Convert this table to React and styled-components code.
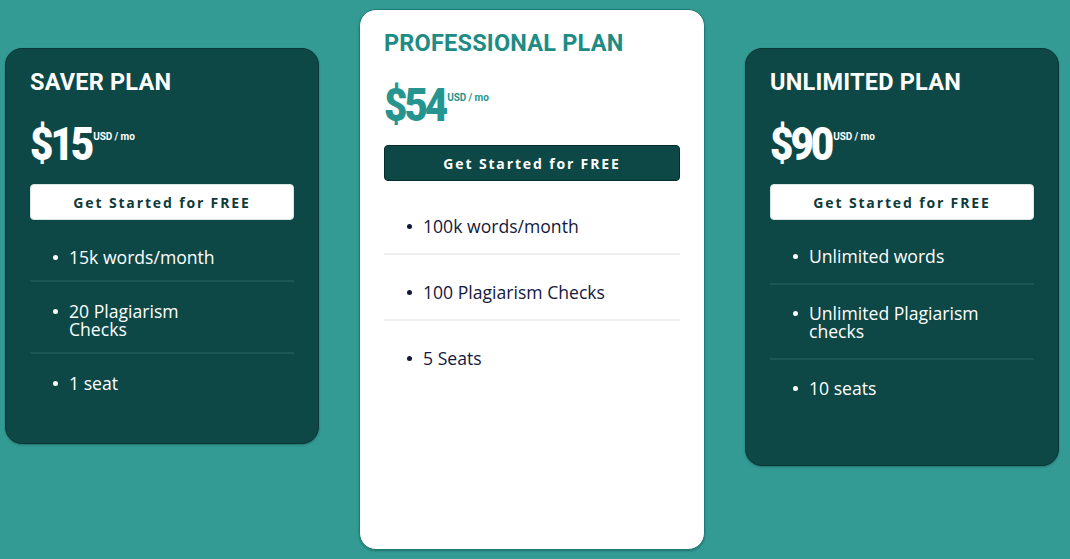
import React from 'react';
import styled, { createGlobalStyle } from 'styled-components';

const GlobalStyle = createGlobalStyle`
  html, body {
    margin: 0;
    padding: 0;
    background: #339a94;
  }
  * { box-sizing: border-box; }
`;

const plans = [
  {
    name: 'SAVER PLAN',
    price: '$15',
    features: ['15k words/month', '20 Plagiarism Checks', '1 seat'],
    height: 396,
    tight: true,
  },
  {
    name: 'PROFESSIONAL PLAN',
    price: '$54',
    features: ['100k words/month', '100 Plagiarism Checks', '5 Seats'],
    height: 541,
    featured: true,
  },
  {
    name: 'UNLIMITED PLAN',
    price: '$90',
    features: ['Unlimited words', 'Unlimited Plagiarism checks', '10 seats'],
    height: 418,
  },
];

const App = () => {
  return (
    <Page>
      <GlobalStyle />
      {plans.map((plan) => (
        <Card key={plan.name} $featured={plan.featured} $height={plan.height}>
          <PlanName $featured={plan.featured}>{plan.name}</PlanName>
          <PriceRow $featured={plan.featured}>
            <Price>{plan.price}</Price>
            <Unit>USD / mo</Unit>
          </PriceRow>
          <StartBtn $featured={plan.featured}>Get Started for FREE</StartBtn>
          <Features>
            {plan.features.map((f) => (
              <Feature key={f} $featured={plan.featured} $tight={plan.tight}>
                <Dot $featured={plan.featured} />
                <FeatureText $featured={plan.featured}>{f}</FeatureText>
              </Feature>
            ))}
          </Features>
        </Card>
      ))}
    </Page>
  );
};

const Page = styled.div`
  width: 1070px;
  height: 559px;
  display: flex;
  align-items: flex-start;
  gap: 40px;
  padding: 48px 0 0 5px;
  overflow: hidden;
`;
const Card = styled.div`
  width: ${(p) => (p.$featured ? '346px' : '314px')};
  height: ${(p) => p.$height}px;
  margin-top: ${(p) => (p.$featured ? '-39px' : '0')};
  padding: 24px 24px 0;
  border-radius: 17px;
  background: ${(p) => (p.$featured ? '#ffffff' : '#0d4846')};
  border: 1px solid ${(p) => (p.$featured ? '#1d7d77' : '#0a3735')};
  box-shadow: 0 1px 2px rgba(0, 40, 40, 0.35);
  display: flex;
  flex-direction: column;
`;
const PlanName = styled.h2`
  margin: 0;
  height: 18px;
  font-family: Roboto, 'Liberation Sans', sans-serif;
  font-weight: 700;
  font-size: 23.5px;
  line-height: 19px;
  letter-spacing: 0.2px;
  color: ${(p) => (p.$featured ? '#1e8c85' : '#ffffff')};
`;
const PriceRow = styled.div`
  margin-top: 34px;
  display: flex;
  align-items: flex-start;
  color: ${(p) => (p.$featured ? '#27958f' : '#ffffff')};
  font-family: Roboto, 'Liberation Sans', sans-serif;
  font-weight: 700;
`;
const Price = styled.span`
  display: inline-block;
  font-size: 47px;
  line-height: 38px;
  font-weight: 900;
  letter-spacing: -3.5px;
  transform: scaleX(0.86);
  transform-origin: left center;
  margin-right: -9px;
`;
const Unit = styled.span`
  margin-left: 1px;
  margin-top: 7px;
  font-size: 10px;
  line-height: 10px;
  letter-spacing: -0.1px;
`;
const StartBtn = styled.button`
  margin-top: 21px;
  width: 100%;
  height: 36px;
  border-radius: 4px;
  border: 1px solid ${(p) => (p.$featured ? '#072e2c' : '#d9e4e3')};
  background: ${(p) => (p.$featured ? '#0d4846' : '#ffffff')};
  color: ${(p) => (p.$featured ? '#ffffff' : '#0d3b39')};
  font-family: 'Open Sans', 'Liberation Sans', sans-serif;
  font-weight: 700;
  font-size: 14px;
  letter-spacing: 1.85px;
  cursor: pointer;
`;
const Features = styled.ul`
  list-style: none;
  margin: 8px 0 0;
  padding: 0;
`;
const Feature = styled.li`
  display: flex;
  align-items: flex-start;
  padding: ${(p) => (p.$featured ? '28px 0 18px' : p.$tight ? '20px 0 14px' : '19px 0 18px')};
  padding-left: 23px;
  border-bottom: 2px solid ${(p) => (p.$featured ? '#eeeeee' : '#1a5654')};
  &:last-child {
    border-bottom: none;
  }
`;
const Dot = styled.span`
  flex: none;
  width: 5px;
  height: 5px;
  margin: 7px 11px 0 0;
  border-radius: 50%;
  background: ${(p) => (p.$featured ? '#14183d' : '#ffffff')};
`;
const FeatureText = styled.span`
  max-width: ${(p) => (p.$featured ? '230px' : '170px')};
  font-family: 'Open Sans', 'Liberation Sans', sans-serif;
  font-size: 17.6px;
  line-height: 18px;
  color: ${(p) => (p.$featured ? '#14183d' : '#ffffff')};
`;

export default App;
